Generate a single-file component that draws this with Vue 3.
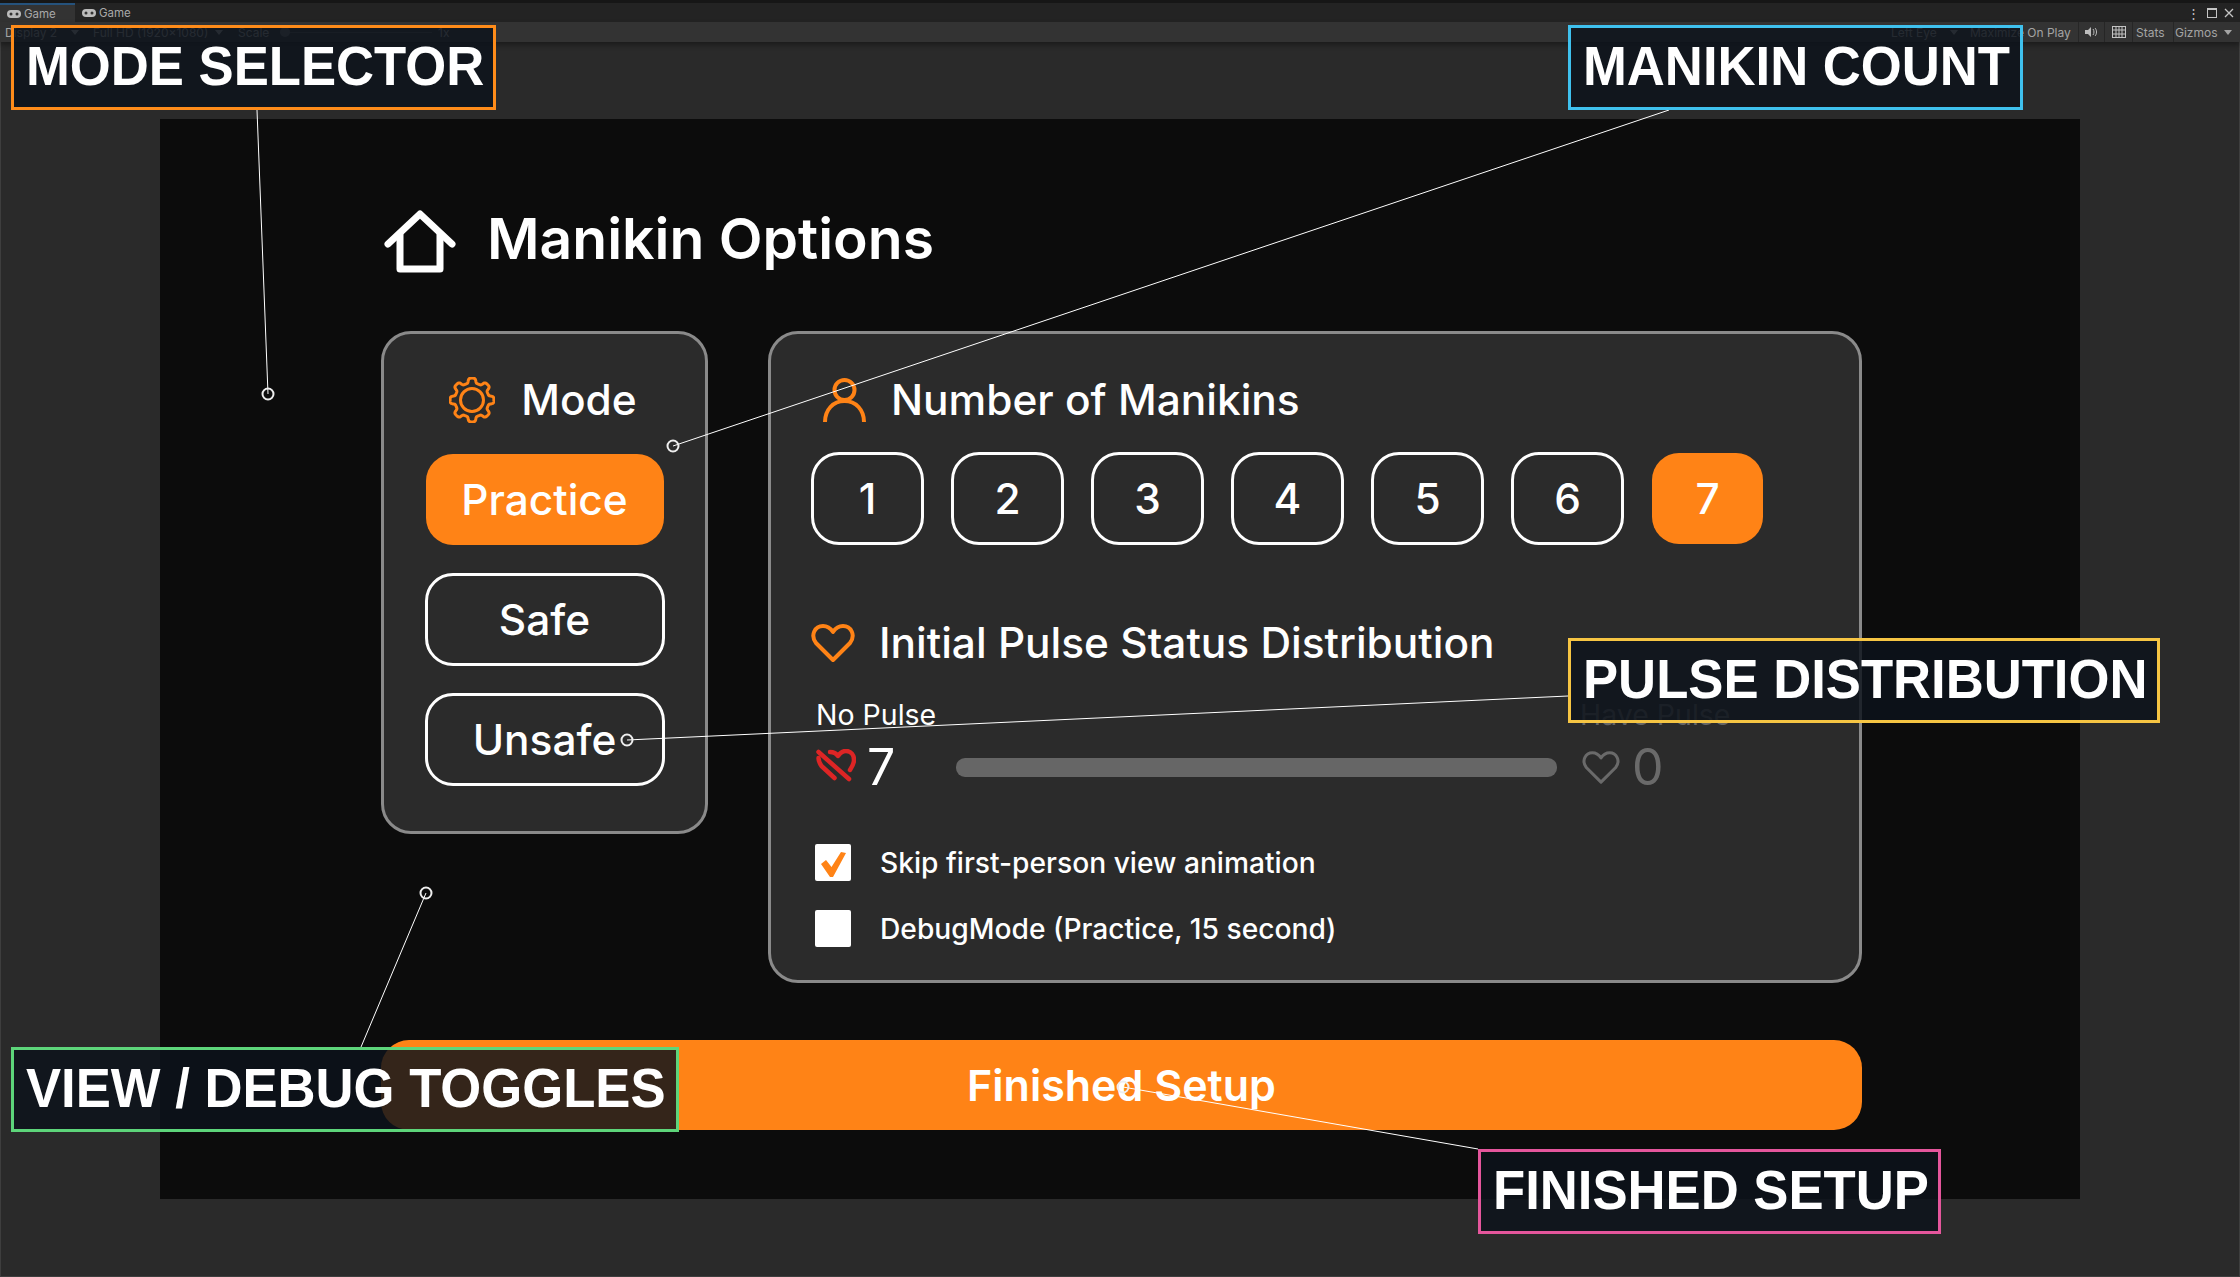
<template>
  <div class="editor">
    <div class="tabbar">
      <div class="tab active">
        <svg class="pad" viewBox="0 0 14 10"><rect x="0" y="1" width="14" height="8" rx="4" fill="#bbb" /><circle cx="4" cy="5" r="1.5" fill="#333" /><circle cx="10" cy="5" r="1.5" fill="#333" /></svg>
        Game
      </div>
      <div class="tab">
        <svg class="pad" viewBox="0 0 14 10"><rect x="0" y="1" width="14" height="8" rx="4" fill="#bbb" /><circle cx="4" cy="5" r="1.5" fill="#333" /><circle cx="10" cy="5" r="1.5" fill="#333" /></svg>
        Game
      </div>
      <div class="window-btns">
        <span class="kebab">⋮</span>
        <span class="max-box"></span>
        <svg class="close" viewBox="0 0 10 10"><path d="M1 1 9 9M9 1 1 9" stroke="#c4c4c4" stroke-width="1.3" /></svg>
      </div>
    </div>

    <div class="toolbar">
      <span class="tool t-display">Display 2</span><span class="caret"></span>
      <span class="tool t-hd">Full HD (1920x1080)</span><span class="caret"></span>
      <span class="tool t-scale">Scale</span>
      <span class="scale-track"><i></i></span>
      <span class="tool t-one">1x</span>
      <span class="spacer"></span>
      <span class="tool t-eye">Left Eye</span><span class="caret"></span>
      <span class="tool t-maxplay">Maximize On Play</span>
      <i class="sep"></i>
      <svg class="tool-icon" viewBox="0 0 14 12"><path d="M1 4h3l3-3v10L4 8H1z" fill="#bdbdbd" /><path d="M9 3c1.300 1.500 1.300 4.500 0 6M11 2c2 2 2 6 0 8" stroke="#bdbdbd" fill="none" /></svg>
      <i class="sep"></i>
      <svg class="tool-icon kb" viewBox="0 0 14 12"><rect x=".5" y=".5" width="13" height="11" fill="none" stroke="#c4c4c4" /><path d="M.5 4h13M.5 8h13M4 .5v11M7 .5v11M10 .500v11" stroke="#c4c4c4" fill="none" /></svg>
      <i class="sep"></i>
      <span class="tool t-stats">Stats</span>
      <i class="sep"></i>
      <span class="tool t-gizmos">Gizmos</span>
      <span class="caret last"></span>
    </div>

    <div class="viewport">
      <main class="canvas">
        <div class="title-row">
          <svg class="home" viewBox="0 0 72 64" fill="none" stroke="#fff" stroke-width="7" stroke-linecap="round" stroke-linejoin="round">
            <path d="M4 34 36 4l32 30" />
            <path d="M16 25v34h40V25" />
          </svg>
          <h1>Manikin Options</h1>
        </div>

        <div class="cards">
          <section class="card mode-card">
            <div class="card-head">
              <svg class="gear" viewBox="0 0 46 46" fill="none" stroke="#ff8316" stroke-width="3">
                <path :d="gearPath" stroke-linejoin="round" />
                <circle cx="23" cy="23" r="11.500" />
              </svg>
              <h2>Mode</h2>
            </div>
            <div class="mode-list">
              <button v-for="m in modes" :key="m" class="opt mode-btn" :class="{ on: m === mode }">{{ m }}</button>
            </div>
          </section>

          <section class="card count-card">
            <div class="card-head left">
              <svg class="person" viewBox="0 0 44 44" fill="none" stroke="#ff8316" stroke-width="4">
                <circle cx="21.500" cy="12" r="10" />
                <path d="M2 44c0-12 8-21 19.500-21S41 32 41 44" />
              </svg>
              <h2>Number of Manikins</h2>
            </div>
            <div class="num-list">
              <button v-for="n in counts" :key="n" class="opt num-btn" :class="{ on: n === count }">{{ n }}</button>
            </div>

            <div class="card-head left pulse-head">
              <svg class="heart" viewBox="0 0 44 40" fill="none" stroke="#ff8316" stroke-width="4" stroke-linejoin="round">
                <path :d="heartPath" />
              </svg>
              <h2>Initial Pulse Status Distribution</h2>
            </div>

            <div class="pulse-grid">
              <span class="pulse-label">No Pulse</span>
              <span></span>
              <span class="pulse-label dim">Have Pulse</span>
              <span class="pulse-val">
                <svg class="heart-off" viewBox="0 0 40 37" fill="none" stroke="#dd2525" stroke-width="4.500" stroke-linecap="round" stroke-linejoin="round">
                  <path d="M14 3c3 0 6 1 8 4 2-3 4-5 8-5 5 0 8 4 8 9 0 4-2 7-4 10" />
                  <path d="M2.500 9c0 3 1 5 3 8l13 12" />
                  <path d="M2.500 3 33 30" />
                </svg>
                {{ count }}
              </span>
              <div class="bar"></div>
              <span class="pulse-val grey">
                <svg class="heart-on" viewBox="0 0 44 40" fill="none" stroke="#6a6a6a" stroke-width="3.500" stroke-linejoin="round">
                  <path :d="heartPath" />
                </svg>
                0
              </span>
            </div>

            <div class="checks">
              <label class="check-row">
                <span class="box">
                  <svg viewBox="0 0 36 37"><path d="M6 20 11 16 16.500 23 26 8 31 9 18 33 15 33Z" fill="#ff8316" /></svg>
                </span>
                Skip first-person view animation
              </label>
              <label class="check-row">
                <span class="box"></span>
                DebugMode (Practice, 15 second)
              </label>
            </div>
          </section>
        </div>

        <button class="finish">Finished Setup</button>
      </main>
    </div>

    <!-- callouts -->
    <svg class="leaders" viewBox="0 0 2240 1277">
      <g v-for="c in callouts" :key="c.text">
        <line :x1="c.from[0]" :y1="c.from[1]" :x2="c.to[0]" :y2="c.to[1]" stroke="#fff" stroke-width="1" />
        <circle :cx="c.to[0]" :cy="c.to[1]" r="5.500" fill="none" stroke="#eee" stroke-width="2" />
      </g>
    </svg>
    <div
      v-for="c in callouts"
      :key="c.text"
      class="callout"
      :style="{ left: c.x + 'px', top: c.y + 'px', width: c.w + 'px', borderColor: c.color }"
    ><span>{{ c.text }}</span></div>
  </div>
</template>

<script setup>
import { ref, computed } from 'vue'

const modes = ['Practice', 'Safe', 'Unsafe']
const counts = [1, 2, 3, 4, 5, 6, 7]
const mode = ref('Practice')
const count = ref(7)

const heartPath = 'M22 37 5 20C-1 12 4 3 12 3c5 0 8 3 10 6 2-3 5-6 10-6 8 0 13 9 7 17z'

// 8 rounded teeth
const gearPath = computed(() => {
  const pts = []
  for (let i = 0; i < 240; i++) {
    const a = (i / 240) * Math.PI * 2
    const r = 19.5 + 2.4 * Math.tanh(2.5 * Math.cos(8 * a)) / Math.tanh(2.5)
    pts.push((23 + r * Math.cos(a)).toFixed(2) + ' ' + (23 + r * Math.sin(a)).toFixed(2))
  }
  return 'M' + pts.join('L') + 'Z'
})

const callouts = [
  { text: 'MODE SELECTOR', x: 11, y: 25, w: 485, color: '#ff8c1a', from: [257, 110], to: [268, 394] },
  { text: 'MANIKIN COUNT', x: 1568, y: 25, w: 455, color: '#3fc1ee', from: [1669, 110], to: [673, 446] },
  { text: 'PULSE DISTRIBUTION', x: 1568, y: 638, w: 592, color: '#f6c543', from: [1568, 696], to: [627, 740] },
  { text: 'VIEW / DEBUG TOGGLES', x: 11, y: 1047, w: 668, color: '#5dd57a', from: [361, 1047], to: [426, 893] },
  { text: 'FINISHED SETUP', x: 1478, y: 1149, w: 463, color: '#e5569c', from: [1478, 1149], to: [1123, 1087] }
]
</script>

<style>
html, body {
  margin: 0;
  background: #2a2a2a;
}
</style>

<style scoped>
.editor {
  position: relative;
  width: 2240px;
  height: 1277px;
  overflow: hidden;
  display: flex;
  flex-direction: column;
  background: #2a2a2a;
  box-shadow: inset 0 0 0 1px #3e3e3e;
  font-family: Inter, "Liberation Sans", sans-serif;
  color: #fff;
}

.tabbar {
  height: 19px;
  padding-top: 3px;
  display: flex;
  background: #232323;
  box-shadow: inset 0 3px 0 #161616;
}
.tab {
  width: 75px;
  display: flex;
  align-items: center;
  gap: 3px;
  padding-left: 7px;
  box-sizing: border-box;
  font-size: 11.500px;
  color: #a8a8a8;
}
.tab.active {
  background: #333;
  border-top: 2px solid #25527c;
}
.pad {
  width: 14px;
  height: 10px;
}
.window-btns {
  margin-left: auto;
  display: flex;
  align-items: center;
  gap: 7px;
  padding-right: 6px;
}
.kebab {
  font-size: 13px;
  color: #c4c4c4;
}
.max-box {
  width: 10px;
  height: 10px;
  border: 1px solid #c4c4c4;
  border-top-width: 2px;
  box-sizing: border-box;
}
.close {
  width: 10px;
  height: 10px;
}

.toolbar {
  height: 20px;
  display: flex;
  align-items: center;
  background: #333;
  box-shadow: 0 3px 5px rgba(0, 0, 0, 0.35);
  position: relative;
  font-size: 12px;
  color: #a4a4a4;
}
.tool {
  white-space: nowrap;
}
.t-display { margin-left: 5px; width: 66px; }
.t-hd { margin-left: 14px; width: 122px; }
.t-scale { margin-left: 15px; width: 42px; }
.t-one { margin-left: 6px; }
.t-eye { width: 59px; }
.t-maxplay { margin-left: 12px; width: 102px; }
.t-stats { margin-left: 4px; width: 31px; }
.t-gizmos { margin-left: 2px; width: 44px; }
.sep {
  width: 1px;
  height: 20px;
  background: #262626;
  margin: 0 -1px 0 6px;
}
.caret {
  width: 0;
  height: 0;
  border: 4px solid transparent;
  border-top: 5px solid #a4a4a4;
  border-bottom: 0;
}
.caret.last { margin-left: 5px; margin-right: 8px; }
.scale-track {
  width: 152px;
  height: 1px;
  background: #555;
  position: relative;
}
.scale-track i {
  position: absolute;
  left: 0;
  top: -5px;
  width: 10px;
  height: 10px;
  border-radius: 50%;
  background: #666;
}
.spacer { flex: 1; }
.tool-icon {
  width: 14px;
  height: 12px;
  margin-left: 6px;
}
.tool-icon.kb { margin-left: 8px; }

.viewport {
  flex: 1;
  padding: 77px 160px 78px;
}
.canvas {
  width: 1920px;
  height: 1080px;
  box-sizing: border-box;
  background: #0c0c0c;
  padding: 85px 218px 0 221px;
}

.title-row {
  height: 70px;
  display: flex;
  align-items: center;
  gap: 31px;
  margin-left: 3px;
}
.home {
  width: 72px;
  height: 64px;
  margin-top: 5px;
}
h1 {
  margin: 0;
  font-size: 57px;
  font-weight: 600;
  line-height: 70px;
}
h2 {
  margin: 0;
  font-size: 42.400px;
  font-weight: 500;
  line-height: 50px;
}

.cards {
  margin-top: 57px;
  display: flex;
  align-items: flex-start;
  gap: 60px;
}
.card {
  box-sizing: border-box;
  background: #2b2b2b;
  border: 3px solid #8a8a8a;
  border-radius: 30px;
  padding-top: 41px;
}
.mode-card {
  width: 327px;
  height: 503px;
}
.mode-card .card-head {
  gap: 26px;
  padding-right: 3px;
}
.count-card {
  flex: 1;
  height: 652px;
  padding-left: 40px;
}
.card-head {
  display: flex;
  align-items: center;
  justify-content: center;
  gap: 24px;
}
.card-head.left {
  justify-content: flex-start;
}
.gear { width: 46px; height: 46px; }
.person { width: 44px; height: 44px; margin-left: 12px; }
.heart { width: 44px; height: 40px; }
.pulse-head { margin-top: 73px; }

.opt {
  box-sizing: border-box;
  background: transparent;
  border: 3px solid #fff;
  border-radius: 28px;
  color: #fff;
  font-family: inherit;
  font-size: 42.400px;
  font-weight: 500;
  padding: 0;
}
.opt.on {
  background: #ff8316;
  background-clip: padding-box;
  border-width: 1px;
  border-color: transparent;
}
.mode-list {
  margin-top: 28px;
  display: flex;
  flex-direction: column;
  align-items: center;
  gap: 27px;
}
.mode-btn {
  width: 240px;
  height: 93px;
}
.num-list {
  margin-top: 27px;
  display: flex;
  gap: 27px;
}
.num-btn {
  width: 113px;
  height: 93px;
}

.pulse-grid {
  margin-top: 28px;
  margin-left: 5px;
  display: grid;
  grid-template-columns: 140px 601px auto;
  grid-template-rows: 38px 56px;
  row-gap: 5px;
  align-items: center;
}
.pulse-label {
  font-size: 28.500px;
  font-weight: 400;
  line-height: 38px;
}
.pulse-label.dim {
  margin-left: 23px;
  color: #666;
}
.pulse-val {
  display: flex;
  align-items: center;
  gap: 11px;
  font-size: 50px;
  font-weight: 400;
}
.pulse-val.grey {
  margin-left: 25px;
  color: #6a6a6a;
  gap: 12px;
}
.heart-off { width: 40px; height: 37px; }
.heart-on { width: 38px; height: 35px; }
.bar {
  height: 19px;
  border-radius: 9px;
  background: #666;
}

.checks {
  margin-top: 49px;
  margin-left: 4px;
  display: flex;
  flex-direction: column;
  gap: 29px;
}
.check-row {
  display: flex;
  align-items: center;
  gap: 29px;
  height: 37px;
  font-size: 28.200px;
  font-weight: 500;
}
.box {
  width: 36px;
  height: 37px;
  background: #fff;
  border-radius: 2px;
}
.box svg {
  display: block;
  width: 36px;
  height: 37px;
}

.finish {
  display: block;
  width: 100%;
  height: 90px;
  margin-top: 57px;
  border: 0;
  border-radius: 28px;
  background: #ff8316;
  color: #fff;
  font-family: inherit;
  font-size: 43px;
  font-weight: 600;
  padding: 0;
}

.leaders {
  position: absolute;
  left: 0;
  top: 0;
  width: 2240px;
  height: 1277px;
  pointer-events: none;
}
.callout {
  position: absolute;
  box-sizing: border-box;
  height: 85px;
  padding-left: 12px;
  border: 3px solid;
  background: rgba(13, 19, 28, 0.84);
  font-family: "Liberation Sans", Arial, sans-serif;
  font-weight: 700;
  font-size: 56px;
  line-height: 76px;
  white-space: nowrap;
  color: #fff;
}
/* labels in the reference are a bit condensed */
.callout span {
  display: inline-block;
  transform: scaleX(0.94);
  transform-origin: left center;
}
</style>
